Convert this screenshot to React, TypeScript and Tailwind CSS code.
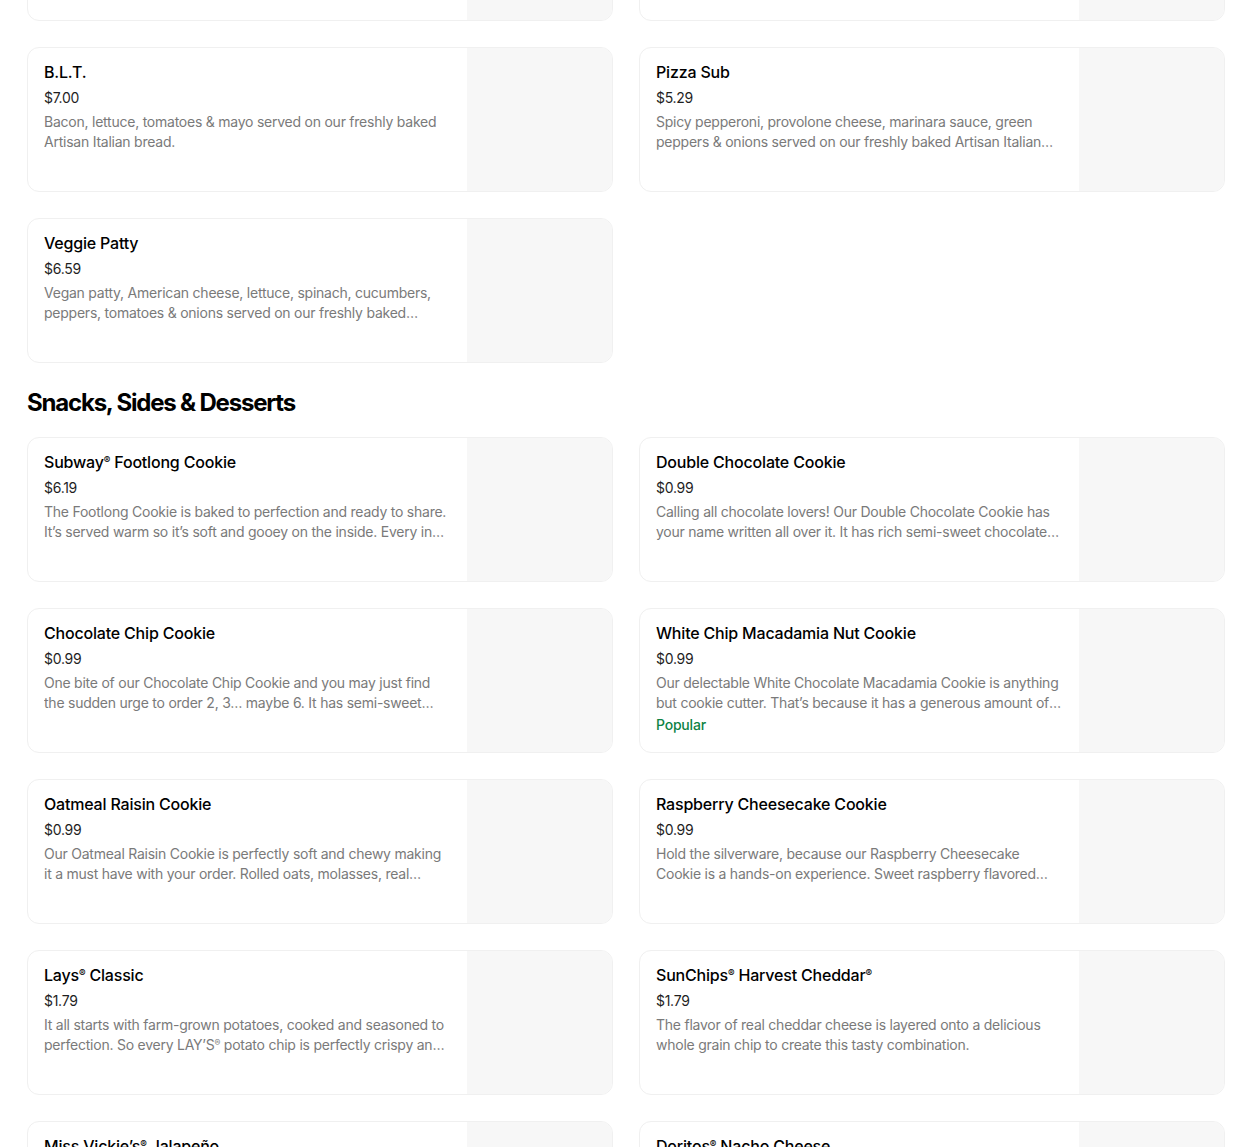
import type { ReactNode } from "react";

type Item = {
  name: string;
  price: string;
  description: string;
  popular?: boolean;
};

const topItems: Item[] = [
  {
    name: "Cold Cut Combo",
    price: "$5.29",
    description: "Ham, salami & bologna served on our freshly baked Artisan Italian bread.",
  },
  {
    name: "Meatball Marinara",
    price: "$5.29",
    description: "Meatballs in marinara sauce served on our freshly baked Artisan Italian bread.",
  },
];

const sandwiches: Item[] = [
  {
    name: "B.L.T.",
    price: "$7.00",
    description: "Bacon, lettuce, tomatoes & mayo served on our freshly baked Artisan Italian bread.",
  },
  {
    name: "Pizza Sub",
    price: "$5.29",
    description:
      "Spicy pepperoni, provolone cheese, marinara sauce, green peppers & onions served on our freshly baked Artisan Italian bread.",
  },
  {
    name: "Veggie Patty",
    price: "$6.59",
    description:
      "Vegan patty, American cheese, lettuce, spinach, cucumbers, peppers, tomatoes & onions served on our freshly baked Hearty Multigrain bread.",
  },
];

const snacks: Item[] = [
  {
    name: "Subway® Footlong Cookie",
    price: "$6.19",
    description:
      "The Footlong Cookie is baked to perfection and ready to share. It’s served warm so it’s soft and gooey on the inside. Every inch is loaded with chocolate chips.",
  },
  {
    name: "Double Chocolate Cookie",
    price: "$0.99",
    description:
      "Calling all chocolate lovers! Our Double Chocolate Cookie has your name written all over it. It has rich semi-sweet chocolate chunks baked in.",
  },
  {
    name: "Chocolate Chip Cookie",
    price: "$0.99",
    description:
      "One bite of our Chocolate Chip Cookie and you may just find the sudden urge to order 2, 3… maybe 6. It has semi-sweet chocolate chips.",
  },
  {
    name: "White Chip Macadamia Nut Cookie",
    price: "$0.99",
    description:
      "Our delectable White Chocolate Macadamia Cookie is anything but cookie cutter. That’s because it has a generous amount of macadamia nuts.",
    popular: true,
  },
  {
    name: "Oatmeal Raisin Cookie",
    price: "$0.99",
    description:
      "Our Oatmeal Raisin Cookie is perfectly soft and chewy making it a must have with your order. Rolled oats, molasses, real raisins and cinnamon.",
  },
  {
    name: "Raspberry Cheesecake Cookie",
    price: "$0.99",
    description:
      "Hold the silverware, because our Raspberry Cheesecake Cookie is a hands-on experience. Sweet raspberry flavored pieces, creamy cheesecake.",
  },
  {
    name: "Lays® Classic",
    price: "$1.79",
    description:
      "It all starts with farm-grown potatoes, cooked and seasoned to perfection. So every LAY’S® potato chip is perfectly crispy and full of flavor.",
  },
  {
    name: "SunChips® Harvest Cheddar®",
    price: "$1.79",
    description:
      "The flavor of real cheddar cheese is layered onto a delicious whole grain chip to create this tasty combination.",
  },
  {
    name: "Miss Vickie’s® Jalapeño",
    price: "$1.79",
    description: "Kettle cooked potato chips with a bold jalapeño kick.",
  },
  {
    name: "Doritos® Nacho Cheese",
    price: "$1.79",
    description: "Bold nacho cheese flavored tortilla chips.",
  },
];

function withMarks(text: string): ReactNode {
  const parts = text.split("®");
  return parts.map((part, index) => (
    <span key={index}>
      {part}
      {index < parts.length - 1 ? (
        <span className="relative -top-[0.45em] text-[0.62em] leading-none">®</span>
      ) : null}
    </span>
  ));
}

function ItemCard({ item }: { item: Item }) {
  return (
    <div className="flex h-[145px] overflow-hidden rounded-xl border border-[#f0f0f0] bg-white">
      <div className="min-w-0 flex-1 pt-[14px] pr-4 pl-4">
        <h3 className="text-[16px] leading-5 font-medium tracking-[-0.012em] text-black">{withMarks(item.name)}</h3>
        <p className="mt-[6px] text-[14px] leading-5 tracking-[-0.02em] text-[#1f1f1f]">{item.price}</p>
        <p className="mt-[4px] line-clamp-2 text-[14px] leading-5 tracking-[-0.017em] text-[#7a7a7a]">
          {withMarks(item.description)}
        </p>
        {item.popular ? (
          <p className="mt-[2px] text-[14px] leading-5 font-medium tracking-[-0.015em] text-[#0e8345]">Popular</p>
        ) : null}
      </div>
      <div className="h-full w-[145px] shrink-0 bg-[#f7f7f7]" />
    </div>
  );
}

function ItemGrid({ items }: { items: Item[] }) {
  return (
    <div className="grid grid-cols-2 gap-[26px]">
      {items.map((item) => (
        <ItemCard key={item.name} item={item} />
      ))}
    </div>
  );
}

export default function App() {
  return (
    <div
      className="h-[1147px] overflow-hidden bg-white"
      style={{ fontFamily: "Inter, 'Noto Sans', sans-serif" }}
    >
      <div className="-mt-[124px] pr-[25px] pl-[27px]">
        <div className="flex flex-col gap-[26px]">
          <ItemGrid items={topItems} />
          <ItemGrid items={sandwiches} />
        </div>
        <h2 className="mt-[24px] mb-[18px] text-[24px] leading-8 font-bold tracking-[-0.05em] text-black">
          Snacks, Sides &amp; Desserts
        </h2>
        <ItemGrid items={snacks} />
      </div>
    </div>
  );
}
